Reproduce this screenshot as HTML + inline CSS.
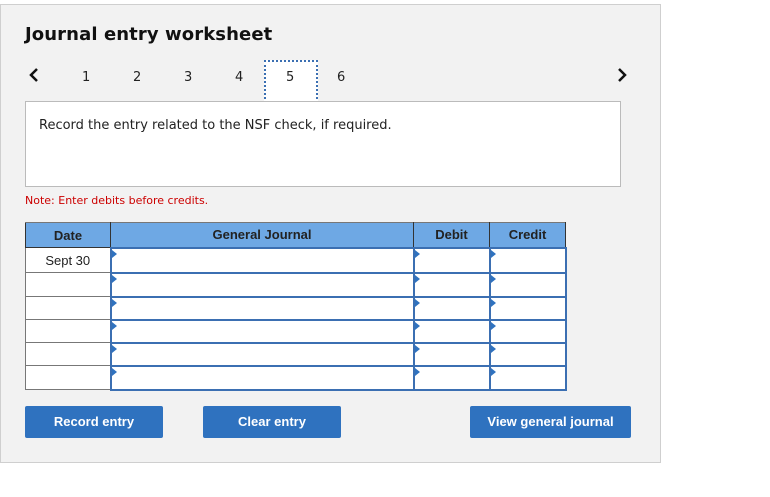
<!DOCTYPE html>
<html><head><meta charset="utf-8"><style>
*{margin:0;padding:0;box-sizing:border-box}
body{width:770px;height:497px;background:#fff;position:relative;overflow:hidden;font-family:"DejaVu Sans","Liberation Sans",sans-serif}
.panel{position:absolute;left:0;top:4px;width:661px;height:459px;background:#f2f2f2;border:1px solid #cfcfcf}
.abs{position:absolute}
h1{position:absolute;left:25px;top:24px;font-size:18px;font-weight:bold;color:#111;letter-spacing:0.1px}
.num{position:absolute;top:70px;font-size:13px;color:#222}
.box{position:absolute;left:25px;top:101px;width:596px;height:86px;background:#fff;border:1px solid #bbb}
.box p{position:absolute;left:13px;top:16px;font-size:13px;color:#222}
.note{position:absolute;left:25px;top:194px;font-size:11px;color:#c00}
table{position:absolute;left:25px;top:222px;border-collapse:collapse;font-family:"Liberation Sans",sans-serif}
th{background:#6ea8e4;height:25px;font-size:13px;color:#222;border:1px solid #333;border-top-color:#777}
td{border:1px solid #777;background:#fff;position:relative;padding:0}
td.in{border:2px solid #3b6fb2;}
td.in:before{content:"";position:absolute;left:0;top:1px;border-left:5px solid #2f72bf;border-top:4px solid transparent;border-bottom:4px solid transparent}
td.d{font-size:13px;text-align:center;color:#222}
.btn{position:absolute;top:406px;height:32px;background:#2f72bf;color:#fff;font-family:"Liberation Sans",sans-serif;font-weight:bold;font-size:13px;text-align:center;line-height:32px;border-radius:2px}
</style></head><body>
<div class="panel"></div>
<h1>Journal entry worksheet</h1>
<svg class="abs" style="left:28px;top:67px" width="12" height="16"><path d="M9 2 L3 8 L9 14" stroke="#111" stroke-width="2.5" fill="none"/></svg>
<svg class="abs" style="left:616px;top:67px" width="12" height="16"><path d="M3 2 L9 8 L3 14" stroke="#111" stroke-width="2.5" fill="none"/></svg>
<span class="num" style="left:82px">1</span>
<span class="num" style="left:133px">2</span>
<span class="num" style="left:184px">3</span>
<span class="num" style="left:235px">4</span>
<div class="abs" style="left:264px;top:60px;width:54px;height:43px;background:#fff;border:2px dotted #3b6fb2"></div>
<span class="num" style="left:286px">5</span>
<span class="num" style="left:337px">6</span>
<div class="box"><p>Record the entry related to the NSF check, if required.</p></div>
<div class="note">Note: Enter debits before credits.</div>
<table>
<tr><th style="width:85px">Date</th><th style="width:303px">General Journal</th><th style="width:76px">Debit</th><th style="width:76px">Credit</th></tr>
<tr style="height:25px"><td class="d">Sept 30</td><td class="in"></td><td class="in"></td><td class="in"></td></tr>
<tr style="height:24px"><td></td><td class="in"></td><td class="in"></td><td class="in"></td></tr>
<tr style="height:23px"><td></td><td class="in"></td><td class="in"></td><td class="in"></td></tr>
<tr style="height:23px"><td></td><td class="in"></td><td class="in"></td><td class="in"></td></tr>
<tr style="height:23px"><td></td><td class="in"></td><td class="in"></td><td class="in"></td></tr>
<tr style="height:24px"><td></td><td class="in"></td><td class="in"></td><td class="in"></td></tr>
</table>
<div class="btn" style="left:25px;width:138px">Record entry</div>
<div class="btn" style="left:203px;width:138px">Clear entry</div>
<div class="btn" style="left:470px;width:161px">View general journal</div>
</body></html>
